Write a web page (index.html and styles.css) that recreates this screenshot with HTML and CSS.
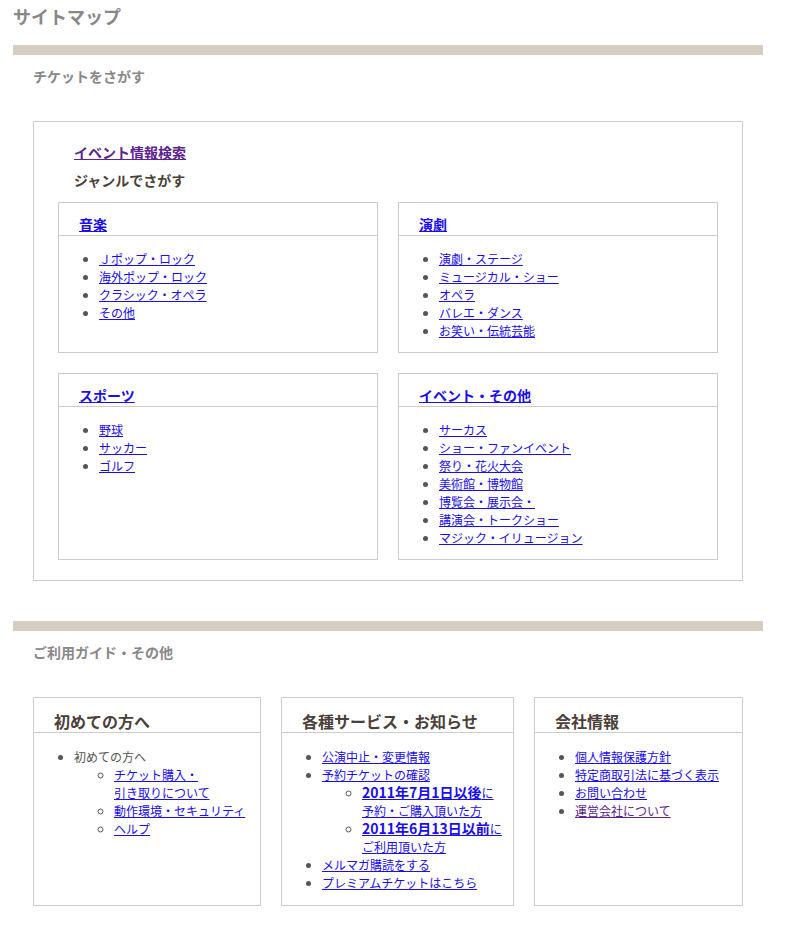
FILE: index.html
```html
<!DOCTYPE html>
<html lang="ja">
<head>
<meta charset="utf-8">
<title>サイトマップ</title>
<link rel="stylesheet" href="styles.css">
</head>
<body>
<div class="page">
  <h1 class="page-title">サイトマップ</h1>

  <section class="section">
    <h2 class="section-title">チケットをさがす</h2>
    <div class="panel">
      <p class="panel-link"><a class="visited" href="#">イベント情報検索</a></p>
      <p class="panel-sub">ジャンルでさがす</p>
      <div class="genre-grid">
        <div class="card">
          <h3 class="card-head"><a href="#">音楽</a></h3>
          <ul class="card-list">
            <li><a href="#">Ｊポップ・ロック</a></li>
            <li><a href="#">海外ポップ・ロック</a></li>
            <li><a href="#">クラシック・オペラ</a></li>
            <li><a href="#">その他</a></li>
          </ul>
        </div>
        <div class="card">
          <h3 class="card-head"><a href="#">演劇</a></h3>
          <ul class="card-list">
            <li><a href="#">演劇・ステージ</a></li>
            <li><a href="#">ミュージカル・ショー</a></li>
            <li><a href="#">オペラ</a></li>
            <li><a href="#">バレエ・ダンス</a></li>
            <li><a href="#">お笑い・伝統芸能</a></li>
          </ul>
        </div>
        <div class="card">
          <h3 class="card-head"><a href="#">スポーツ</a></h3>
          <ul class="card-list">
            <li><a href="#">野球</a></li>
            <li><a href="#">サッカー</a></li>
            <li><a href="#">ゴルフ</a></li>
          </ul>
        </div>
        <div class="card">
          <h3 class="card-head"><a href="#">イベント・その他</a></h3>
          <ul class="card-list">
            <li><a href="#">サーカス</a></li>
            <li><a href="#">ショー・ファンイベント</a></li>
            <li><a href="#">祭り・花火大会</a></li>
            <li><a href="#">美術館・博物館</a></li>
            <li><a href="#">博覧会・展示会・</a></li>
            <li><a href="#">講演会・トークショー</a></li>
            <li><a href="#">マジック・イリュージョン</a></li>
          </ul>
        </div>
      </div>
    </div>
  </section>

  <section class="section section-guide">
    <h2 class="section-title">ご利用ガイド・その他</h2>
    <div class="guide-grid">
      <div class="gbox">
        <h3 class="gbox-head">初めての方へ</h3>
        <ul class="card-list">
          <li>初めての方へ
            <ul class="sub-list">
              <li><a href="#">チケット購入・<br>引き取りについて</a></li>
              <li><a href="#">動作環境・セキュリティ</a></li>
              <li><a href="#">ヘルプ</a></li>
            </ul>
          </li>
        </ul>
      </div>
      <div class="gbox">
        <h3 class="gbox-head">各種サービス・お知らせ</h3>
        <ul class="card-list">
          <li><a href="#">公演中止・変更情報</a></li>
          <li><a href="#">予約チケットの確認</a>
            <ul class="sub-list">
              <li><a href="#"><strong class="date">2011年7月1日以後</strong>に<br>予約・ご購入頂いた方</a></li>
              <li><a href="#"><strong class="date">2011年6月13日以前</strong>に<br>ご利用頂いた方</a></li>
            </ul>
          </li>
          <li><a href="#">メルマガ購読をする</a></li>
          <li><a href="#">プレミアムチケットはこちら</a></li>
        </ul>
      </div>
      <div class="gbox">
        <h3 class="gbox-head">会社情報</h3>
        <ul class="card-list">
          <li><a href="#">個人情報保護方針</a></li>
          <li><a href="#">特定商取引法に基づく表示</a></li>
          <li><a href="#">お問い合わせ</a></li>
          <li><a class="visited" href="#">運営会社について</a></li>
        </ul>
      </div>
    </div>
  </section>
</div>
</body>
</html>
```

FILE: styles.css
```css
html, body {
  margin: 0;
  padding: 0;
  background: #fff;
}

body {
  font-family: "Noto Sans CJK JP", "Noto Sans", sans-serif;
  color: #555;
  font-size: 12px;
}

.page {
  width: 750px;
  margin-left: 13px;
}

.page-title {
  margin: 0;
  padding-top: 4px;
  font-size: 18px;
  line-height: 24px;
  font-weight: bold;
  color: #888;
}

.section {
  margin-top: 17px;
  border-top: 10px solid #d6cdc2;
}

.section-guide {
  margin-top: 40px;
}

.section-title {
  margin: 11px 0 0 20px;
  font-size: 14px;
  line-height: 20px;
  font-weight: bold;
  color: #888;
}

a {
  color: #1a0dee;
  text-decoration: underline;
}

a.visited {
  color: #5b2491;
}

.panel {
  margin: 35px 20px 0 20px;
  border: 1px solid #cccccc;
  padding: 20px 24px 20px 24px;
}

.panel-link {
  margin: 0 0 0 16px;
  font-size: 14px;
  line-height: 20px;
  font-weight: bold;
}

.panel-sub {
  margin: 8px 0 0 16px;
  font-size: 14px;
  line-height: 20px;
  font-weight: bold;
  color: #4b403a;
}

.genre-grid {
  margin-top: 12px;
  display: grid;
  grid-template-columns: 1fr 1fr;
  gap: 20px;
}

.card {
  border: 1px solid #cccccc;
}

.card-head {
  margin: 0;
  padding: 11px 20px 1px 20px;
  font-size: 14px;
  line-height: 20px;
  font-weight: bold;
  border-bottom: 1px solid #cccccc;
}

.card-list {
  margin: 14px 0 12px 0;
  padding-left: 40px;
  list-style: disc;
  font-size: 12px;
  line-height: 18px;
  color: #555;
}

.sub-list {
  margin: 0;
  padding-left: 40px;
  list-style: circle;
}

.guide-grid {
  margin: 35px 20px 0 20px;
  display: grid;
  grid-template-columns: 228px 233px 209px;
  gap: 20px;
}

.gbox {
  border: 1px solid #cccccc;
  height: 207px;
}

.gbox-head {
  margin: 0;
  padding: 12px 20px 0 20px;
  font-size: 16px;
  line-height: 22px;
  font-weight: bold;
  color: #4b403a;
  border-bottom: 1px solid #cccccc;
}

.gbox .card-list {
  margin-top: 15px;
}

.date {
  font-size: 14px;
  line-height: 14px;
  font-weight: bold;
}
```
